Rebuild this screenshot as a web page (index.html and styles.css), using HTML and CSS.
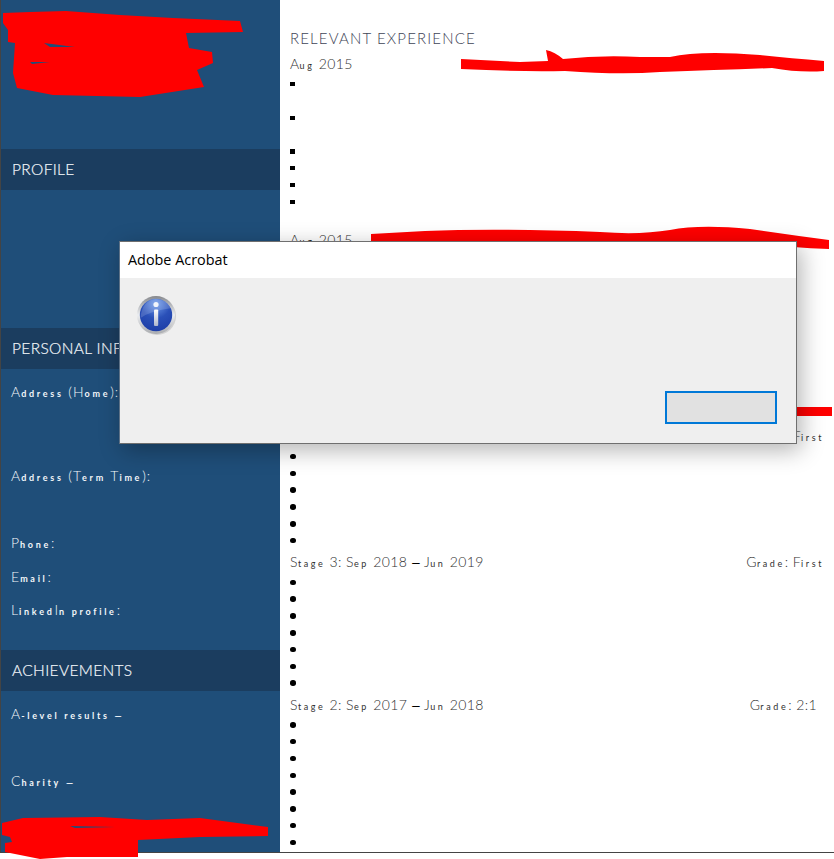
FILE: index.html
```html
<!DOCTYPE html>
<html lang="en">
<head>
<meta charset="utf-8">
<title>CV with Adobe Acrobat dialog</title>
<link rel="stylesheet" href="styles.css">
</head>
<body>
<div class="page">
  <aside class="side">
    <div class="side-top"></div>
    <h2 class="bar">PROFILE</h2>
    <div class="side-profile"></div>
    <h2 class="bar">PERSONAL INFORMATION</h2>
    <div class="side-info">
      <p class="label rows-5">A<small>ddress</small> (H<small>ome</small>):</p>
      <p class="label rows-4">A<small>ddress</small> (T<small>erm</small> T<small>ime</small>):</p>
      <p class="label rows-2">P<small>hone</small>:</p>
      <p class="label rows-2">E<small>mail</small>:</p>
      <p class="label">L<small>inked</small>I<small>n profile</small>:</p>
    </div>
    <h2 class="bar">ACHIEVEMENTS</h2>
    <div class="side-ach">
      <p class="label rows-4">A<small>-level results</small> <small>—</small></p>
      <p class="label">C<small>harity</small> <small>—</small></p>
    </div>
  </aside>
  <main class="main">
    <h1 class="title">RELEVANT EXPERIENCE</h1>
    <p class="row">A<small>ug</small> 2015</p>
    <ul class="list square">
      <li>&nbsp;<br>&nbsp;</li>
      <li>&nbsp;<br>&nbsp;</li>
      <li>&nbsp;</li>
      <li>&nbsp;</li>
      <li>&nbsp;</li>
      <li>&nbsp;</li>
    </ul>
    <p class="row gap-a">A<small>ug</small> 2015</p>
    <div class="hidden-block"></div>
    <p class="row between"><span>S<small>tage</small> 4</span><span class="grade-first">G<small>rade</small>: F<small>irst</small></span></p>
    <ul class="list">
      <li>&nbsp;</li><li>&nbsp;</li><li>&nbsp;</li><li>&nbsp;</li><li>&nbsp;</li><li>&nbsp;</li>
    </ul>
    <p class="row between stage"><span>S<small>tage</small> 3: S<small>ep</small> 2018 <b>—</b> J<small>un</small> 2019</span><span class="grade-first">G<small>rade</small>: F<small>irst</small></span></p>
    <ul class="list">
      <li>&nbsp;</li><li>&nbsp;</li><li>&nbsp;</li><li>&nbsp;</li><li>&nbsp;</li><li>&nbsp;</li><li>&nbsp;</li>
    </ul>
    <p class="row between stage"><span>S<small>tage</small> 2: S<small>ep</small> 2017 <b>—</b> J<small>un</small> 2018</span><span class="grade-two">G<small>rade</small>: 2:1</span></p>
    <ul class="list">
      <li>&nbsp;</li><li>&nbsp;</li><li>&nbsp;</li><li>&nbsp;</li><li>&nbsp;</li><li>&nbsp;</li><li>&nbsp;</li><li>&nbsp;</li>
    </ul>
  </main>
</div>

<svg class="redact" width="834" height="859" viewBox="0 0 834 859" aria-hidden="true">
  <path fill-rule="evenodd" d="M3 13 L30 12 L66 11 L120 15 L173 18 L240 21 L243 32 L186 33 L189 48 L212 52 L213 63 L197 70 L204 87 L140 97 L53 95 L17 88 L13 73 L15 43 L8 42 L8 30 L3 23 Z M44 43 L75 47 L50 47 Z M30 62 L50 62 L32 64 Z"/>
  <path d="M461 59 L520 62 L548 61 L546 50 Q555 52 563 59 Q600 55 640 57 L670 57 Q700 50 760 55 Q790 58 824 61 L824 71 Q800 73 772 68 Q720 70 660 72 Q620 75 565 71 Q520 72 461 69 Z"/>
  <path d="M371 234 L425 231 Q500 228 600 232 Q640 235 670 230 Q700 224 750 229 Q790 235 829 240 L829 249 Q790 248 760 243 Q700 240 650 242 Q600 242 540 243 Q480 248 425 243 L371 241 Z"/>
  <path d="M780 407 L832 407 L832 416 L780 416 Z"/>
  <path fill-rule="evenodd" d="M2 823 L23 818 L100 817 L147 820 L200 818 L268 827 L268 836 L200 837 L138 840 L138 857 L67 857 L40 859 L5 852 L5 843 L12 842 L10 837 L2 835 Z M70 826 L115 827 L75 828 Z"/>
</svg>

<section class="dialog" role="dialog" aria-label="Adobe Acrobat">
  <header class="dialog-title">Adobe Acrobat</header>
  <div class="dialog-body">
    <svg class="info-icon" width="42" height="42" viewBox="0 0 42 42" aria-hidden="true">
      <defs>
        <linearGradient id="ring" x1="0" y1="0" x2="0" y2="1">
          <stop offset="0" stop-color="#85878c"/>
          <stop offset="0.5" stop-color="#eceef1"/>
          <stop offset="1" stop-color="#a9abaf"/>
        </linearGradient>
        <radialGradient id="ball" cx="0.5" cy="0.15" r="0.9">
          <stop offset="0" stop-color="#6f9bea"/>
          <stop offset="0.5" stop-color="#2a50b8"/>
          <stop offset="1" stop-color="#1c3ca6"/>
        </radialGradient>
        <linearGradient id="stem" x1="0" y1="0" x2="0" y2="1">
          <stop offset="0" stop-color="#ffffff"/>
          <stop offset="1" stop-color="#aeb6cc"/>
        </linearGradient>
      </defs>
      <circle cx="21" cy="22" r="19" fill="#000" opacity="0.12"/>
      <circle cx="20" cy="21" r="19" fill="url(#ring)"/>
      <circle cx="20" cy="21" r="16.2" fill="url(#ball)"/>
      <path d="M4.5 24 Q14 17 36 14 Q31 6 20 5 Q6 6 4.5 24 Z" fill="#fff" opacity="0.16"/>
      <circle cx="20" cy="10.5" r="2.6" fill="#f2f5fb"/>
      <rect x="18" y="15.5" width="4.2" height="16.5" rx="1" fill="url(#stem)"/>
    </svg>
    <div class="dialog-actions"><button class="dialog-btn" type="button" aria-label="OK"></button></div>
  </div>
</section>
</body>
</html>
```
FILE: styles.css
```css
* { box-sizing: border-box; }
html, body { margin: 0; padding: 0; background: #fff; }
body { width: 834px; height: 859px; overflow: hidden; position: relative; font-family: Lato, "Liberation Sans", sans-serif; }

.page { display: flex; height: 853px; border-left: 1px solid #444; border-bottom: 1px solid #444; }

.side { flex: 0 0 279px; background: #1f4e79; color: #f4f7fa; }
.side-top { height: 149px; }
.bar { margin: 0; height: 41px; line-height: 41px; padding-left: 11px; background: #1b3d5f; color: #f2f6fa; font-size: 15.5px; font-weight: 300; letter-spacing: 0.35px; -webkit-text-stroke: 0.2px #f2f6fa; white-space: nowrap; overflow: hidden; }
.side-profile { height: 138px; }
.side-info { height: 281px; padding: 15px 0 0 10px; }
.side-ach { padding: 15px 0 0 10px; }
.label { margin: 0; font-size: 14px; line-height: 16.8px; letter-spacing: 1px; font-weight: 300; }
.label small { font-size: 9px; letter-spacing: 2.7px; font-weight: 700; }
.rows-2 { min-height: 33.6px; }
.rows-4 { min-height: 67.2px; }
.rows-5 { min-height: 84px; }

.main { flex: 1; padding: 29px 10px 0 10px; color: #2f2f2f; }
.title { margin: 0; font-size: 15px; line-height: 19px; font-weight: 300; letter-spacing: 1.15px; color: #3e4456; }
.row { margin: 7px 0 0; font-size: 14px; line-height: 17px; font-weight: 300; letter-spacing: 0.4px; }
.row small { font-size: 9px; letter-spacing: 2.6px; font-weight: 400; }
.row b { color: #000; font-weight: 700; font-size: 11px; letter-spacing: 0; }
.between { display: flex; justify-content: space-between; }
.gap-a { margin-top: 22px; }
.hidden-block { height: 170px; }
.stage { margin-top: 5px; }
.grade-two { margin-right: 7px; }

.list { margin: 1px 0 0; padding: 0; list-style: none; color: #000; font-size: 13px; line-height: 16.8px; }
.list li::before { content: ""; display: inline-block; width: 5.5px; height: 5.5px; margin-top: -1px; border-radius: 50%; background: #000; vertical-align: middle; }
.square li::before { width: 4.5px; height: 4.5px; border-radius: 0; }

.redact { position: absolute; left: 0; top: 0; fill: #ff0000; }

.dialog { position: absolute; left: 119px; top: 241px; width: 678px; height: 203px; background: #efefef; border: 1px solid #6f6f6f; border-left-color: #5d7186; box-shadow: 4px 6px 22px rgba(0, 0, 0, 0.3); display: flex; flex-direction: column; }
.dialog-title { height: 36px; background: #fff; padding-left: 8px; font-family: "Open Sans", "Noto Sans", sans-serif; font-size: 14.4px; line-height: 35px; color: #000; }
.dialog-body { flex: 1; display: flex; flex-direction: column; justify-content: space-between; padding: 16px 19px 19px 16px; }
.info-icon { display: block; }
.dialog-actions { display: flex; justify-content: flex-end; }
.dialog-btn { width: 112px; height: 33px; padding: 0; background: #e1e1e1; border: 2px solid #0078d7; border-radius: 0; }
```
